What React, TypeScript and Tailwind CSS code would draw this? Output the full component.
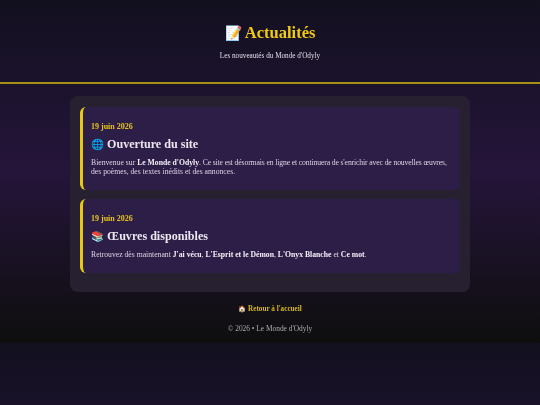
function NewsCard({
  icon,
  title,
  children,
}: {
  icon: string;
  title: string;
  children: React.ReactNode;
}) {
  return (
    <article className="rounded-md border-l-[3px] border-[#e9c814] bg-[#2d1e48] pt-[15px] pr-[11px] pb-[14px] pl-2">
      <p className="text-[8px] leading-[10px] font-bold text-[#e6c21a]">19 juin 2026</p>
      <h2 className="mt-[2px] text-[12.1px] leading-[20px] font-bold text-[#ece6f0]">
        <span className="text-[10.5px]">{icon}</span> {title}
      </h2>
      <p className="mt-[3px] text-[7.7px] leading-[9px] text-[#ddd5e4]">{children}</p>
    </article>
  );
}

export default function App() {
  return (
    <div className='min-h-[405px] bg-[linear-gradient(180deg,#12101f_0%,#25153a_50%,#0e0e0e_100%)] bg-[length:100%_343px] font-["Liberation_Serif",serif]'>
      <header className="flex h-[84px] flex-col items-center border-b-2 border-[#a88f12] pt-[23px] will-change-transform">
        <h1 className="text-[16.5px] leading-[20px] font-bold text-[#f2cb11]">
          <span className="text-[14px]">📝</span> Actualités
        </h1>
        <p className="mt-[7px] text-[7.2px] leading-[10px] text-[#e2dce8]">Les nouveautés du Monde d'Odyly</p>
      </header>
      <main className="mx-[70px] mt-[12px] flex flex-col gap-[9px] rounded-[8px] bg-[#272030] pt-[11px] pr-[10px] pb-[19px] pl-[10px] will-change-transform">
        <NewsCard icon="🌐" title="Ouverture du site">
          Bienvenue sur <strong className="text-[#f5f0f8]">Le Monde d'Odyly</strong>
          <span className="tracking-[-0.13px]">. Ce site est désormais en ligne et continuera de s'enrichir avec de nouvelles œuvres,</span> des poèmes, des textes inédits et des annonces.
        </NewsCard>
        <NewsCard icon="📚" title="Œuvres disponibles">
          Retrouvez dès maintenant <strong className="text-[#f5f0f8]">J'ai vécu</strong>, <strong className="text-[#f5f0f8]">L'Esprit et le Démon</strong>, <strong className="text-[#f5f0f8]">L'Onyx Blanche</strong> et <strong className="text-[#f5f0f8]">Ce mot</strong>.
        </NewsCard>
      </main>
      <footer className="flex flex-col items-center pt-[11px] will-change-transform">
        <a className="text-[7.2px] leading-[11px] font-bold text-[#d9b91a]">
          <span className="text-[6.5px]">🏠</span> Retour à l'accueil
        </a>
        <p className="mt-[8px] text-[7.4px] leading-[11px] text-[#aeaab2]">© 2026 • Le Monde d'Odyly</p>
      </footer>
    </div>
  );
}
